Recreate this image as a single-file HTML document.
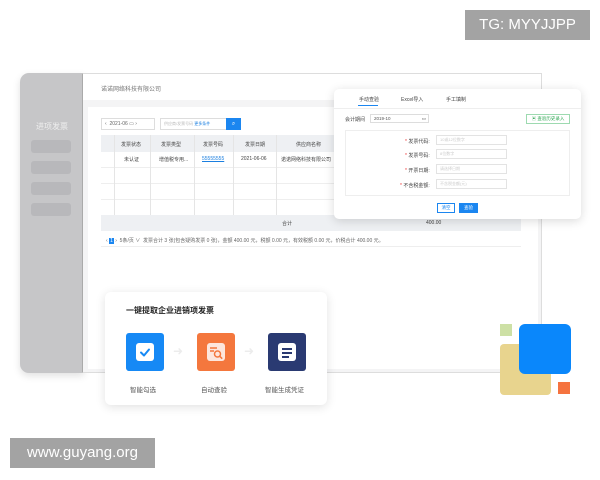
<!DOCTYPE html><html><head><meta charset="utf-8"><style>
*{margin:0;padding:0;box-sizing:border-box}
body{width:600px;height:480px;background:#fff;position:relative;overflow:hidden;font-family:"Liberation Sans","Noto Sans CJK SC",sans-serif;color:#555}
.a{position:absolute}
.t{font-size:5px;color:#444}
</style></head><body>
<div class="a" style="left:20px;top:73px;width:64px;height:300px;background:#c6c6c8;border-radius:9px 0 0 9px;box-shadow:0 3px 8px rgba(0,0,0,.12)"></div>
<div class="a" style="left:36px;top:121px;font-size:8px;color:#eee">进项发票</div>
<div class="a" style="left:31px;top:140px;width:40px;height:13px;background:#b8b8bb;border-radius:3px"></div>
<div class="a" style="left:31px;top:161px;width:40px;height:13px;background:#b8b8bb;border-radius:3px"></div>
<div class="a" style="left:31px;top:182px;width:40px;height:13px;background:#b8b8bb;border-radius:3px"></div>
<div class="a" style="left:31px;top:203px;width:40px;height:13px;background:#b8b8bb;border-radius:3px"></div>
<div class="a" style="left:82px;top:73px;width:460px;height:300px;background:#f4f4f5;border:1px solid #ddd;border-left:1px solid #aaa"></div>
<div class="a" style="left:83px;top:74px;width:458px;height:26px;background:#fff"></div>
<div class="a" style="left:101px;top:84px;font-size:6px;color:#777">诺诺网络科技有限公司</div>
<div class="a" style="left:88px;top:107px;width:450px;height:262px;background:#fff"></div>
<div class="a" style="left:101px;top:118px;width:54px;height:12px;border:1px solid #ddd;font-size:5px;line-height:10px;padding-left:3px;color:#666">‹ &nbsp;2021-06 ▭ ›</div>
<div class="a" style="left:160px;top:118px;width:68px;height:12px;border:1px solid #ddd;font-size:4px;line-height:10px;padding-left:3px;color:#bbb">供应商/发票号码 <span style="color:#1b7fe0">更多条件</span></div>
<div class="a" style="left:226px;top:118px;width:15px;height:12px;background:#1b86f0;color:#fff;font-size:6px;text-align:center;line-height:12px">⌕</div>
<div class="a" style="left:101px;top:135px;width:420px;height:17px;background:#eef0f3"></div>
<div class="a" style="left:101px;top:215px;width:420px;height:16px;background:#eef0f3"></div>
<div class="a" style="left:101px;top:152px;width:420px;height:63px;background:repeating-linear-gradient(#fff 0 15px,#eee 15px 16px)"></div>
<div class="a" style="left:114px;top:135px;width:1px;height:80px;background:#e5e5e5"></div>
<div class="a" style="left:150px;top:135px;width:1px;height:80px;background:#e5e5e5"></div>
<div class="a" style="left:194px;top:135px;width:1px;height:80px;background:#e5e5e5"></div>
<div class="a" style="left:233px;top:135px;width:1px;height:80px;background:#e5e5e5"></div>
<div class="a" style="left:276px;top:135px;width:1px;height:80px;background:#e5e5e5"></div>
<div class="a t" style="left:121px;top:141px">发票状态</div>
<div class="a t" style="left:161px;top:141px">发票类型</div>
<div class="a t" style="left:203px;top:141px">发票号码</div>
<div class="a t" style="left:245px;top:141px">发票日期</div>
<div class="a t" style="left:296px;top:141px">供应商名称</div>
<div class="a t" style="left:124px;top:156px">未认证</div>
<div class="a t" style="left:159px;top:156px">增值税专用...</div>
<div class="a t" style="left:202px;top:156px;color:#1b7fe0;text-decoration:underline">55555555</div>
<div class="a t" style="left:241px;top:156px">2021-06-06</div>
<div class="a t" style="left:281px;top:156px">诺诺网络科技有限公司</div>
<div class="a t" style="left:282px;top:220px">合计</div>
<div class="a t" style="left:426px;top:220px">400.00</div>
<div class="a t" style="left:106px;top:237px;color:#666">‹ <span style="background:#1b86f0;color:#fff;padding:0 1px">1</span> › &nbsp;5条/页 ∨ &nbsp;发票合计 3 张(包含疑购发票 0 张)，金额 400.00 元，税额 0.00 元，有效税额 0.00 元，价税合计 400.00 元。</div>
<div class="a" style="left:101px;top:246px;width:420px;height:1px;background:#eee"></div>
<div class="a" style="left:334px;top:89px;width:247px;height:130px;background:#fff;border-radius:5px;box-shadow:0 2px 10px rgba(0,0,0,.15)"></div>
<div class="a t" style="left:359px;top:96px">手动查验</div>
<div class="a" style="left:358px;top:105px;width:20px;height:1px;background:#1b86f0"></div>
<div class="a t" style="left:401px;top:96px">Excel导入</div>
<div class="a t" style="left:446px;top:96px">手工填制</div>
<div class="a" style="left:334px;top:108px;width:247px;height:1px;background:#eee"></div>
<div class="a t" style="left:345px;top:116px">会计期间</div>
<div class="a" style="left:370px;top:114px;width:59px;height:9px;border:1px solid #ddd;font-size:4.5px;line-height:7px;padding-left:3px">2019-10 <span style="float:right;padding-right:2px">▭</span></div>
<div class="a" style="left:526px;top:114px;width:44px;height:10px;border:1px solid #9ddab0;font-size:4.5px;line-height:8px;color:#2aa54f;text-align:center">▣ 查验历史录入</div>
<div class="a" style="left:345px;top:130px;width:225px;height:66px;border:1px solid #eee"></div>
<div class="a t" style="left:405px;top:138px"><span style="color:#e33">*</span> 发票代码:</div>
<div class="a" style="left:436px;top:135px;width:71px;height:10px;border:1px solid #e3e3e3;font-size:4px;color:#ccc;line-height:8px;padding-left:3px">10或12位数字</div>
<div class="a t" style="left:405px;top:152px"><span style="color:#e33">*</span> 发票号码:</div>
<div class="a" style="left:436px;top:149px;width:71px;height:10px;border:1px solid #e3e3e3;font-size:4px;color:#ccc;line-height:8px;padding-left:3px">8位数字</div>
<div class="a t" style="left:405px;top:167px"><span style="color:#e33">*</span> 开票日期:</div>
<div class="a" style="left:436px;top:164px;width:71px;height:10px;border:1px solid #e3e3e3;font-size:4px;color:#ccc;line-height:8px;padding-left:3px">请选择日期</div>
<div class="a t" style="left:400px;top:182px"><span style="color:#e33">*</span> 不含税金额:</div>
<div class="a" style="left:436px;top:179px;width:71px;height:10px;border:1px solid #e3e3e3;font-size:4px;color:#ccc;line-height:8px;padding-left:3px">不含税金额(元)</div>
<div class="a" style="left:437px;top:203px;width:18px;height:10px;border:1px solid #1b86f0;font-size:4.5px;color:#1b86f0;text-align:center;line-height:8px">清空</div>
<div class="a" style="left:459px;top:203px;width:19px;height:10px;background:#1b86f0;font-size:4.5px;color:#fff;text-align:center;line-height:10px">查验</div>
<div class="a" style="left:105px;top:292px;width:222px;height:113px;background:#fff;border-radius:6px;box-shadow:0 2px 10px rgba(0,0,0,.12)"></div>
<div class="a" style="left:126px;top:305px;font-size:8px;color:#222;font-weight:bold">一键提取企业进销项发票</div>
<div class="a" style="left:126px;top:333px;width:38px;height:38px;background:#1689f5;border-radius:3px"></div>
<div class="a" style="left:136px;top:343px;width:18px;height:18px;background:#fff;border-radius:3px"></div>
<svg class="a" style="left:136px;top:343px" width="18" height="18"><path d="M5 9.5l3 3 5-6" stroke="#1689f5" stroke-width="2" fill="none" stroke-linecap="round" stroke-linejoin="round"/></svg>
<div class="a" style="left:197px;top:333px;width:38px;height:38px;background:#f4773d;border-radius:3px"></div>
<div class="a" style="left:207px;top:343px;width:18px;height:18px;background:#fde6dc;border-radius:3px"></div>
<svg class="a" style="left:207px;top:343px" width="18" height="18"><path d="M3 5h7M3 8h4" stroke="#f4773d" stroke-width="1.5"/><circle cx="10.5" cy="11" r="3" stroke="#f4773d" stroke-width="1.5" fill="none"/><path d="M12.7 13.2l2.5 2.5" stroke="#f4773d" stroke-width="1.5"/></svg>
<div class="a" style="left:268px;top:333px;width:38px;height:38px;background:#2a3a72;border-radius:3px"></div>
<div class="a" style="left:278px;top:343px;width:18px;height:18px;background:#fff;border-radius:3px"></div>
<div class="a" style="left:282px;top:348px;width:10px;height:2px;background:#2a3a72"></div>
<div class="a" style="left:282px;top:352px;width:10px;height:2px;background:#2a3a72"></div>
<div class="a" style="left:282px;top:356px;width:7px;height:2px;background:#2a3a72"></div>
<div class="a" style="left:173px;top:344px;font-size:12px;color:#ececec">➜</div>
<div class="a" style="left:244px;top:344px;font-size:12px;color:#ececec">➜</div>
<div class="a" style="left:130px;top:384px;font-size:6.5px;color:#555">智能勾选</div>
<div class="a" style="left:201px;top:384px;font-size:6.5px;color:#555">自动查验</div>
<div class="a" style="left:265px;top:384px;font-size:6.5px;color:#555">智能生成凭证</div>
<div class="a" style="left:500px;top:324px;width:12px;height:12px;background:#cde0a5"></div>
<div class="a" style="left:500px;top:344px;width:51px;height:51px;background:#e8d48e;border-radius:4px"></div>
<div class="a" style="left:519px;top:324px;width:52px;height:50px;background:#0a87fb;border-radius:6px"></div>
<div class="a" style="left:558px;top:382px;width:12px;height:12px;background:#f5733f"></div>
<div class="a" style="left:465px;top:10px;width:125px;height:30px;background:#a3a3a3;color:#fff;font-size:15px;line-height:30px;text-align:center">TG: MYYJJPP</div>
<div class="a" style="left:10px;top:438px;width:145px;height:30px;background:#a3a3a3;color:#fff;font-size:15px;line-height:30px;text-align:center">www.guyang.org</div>
</body></html>
